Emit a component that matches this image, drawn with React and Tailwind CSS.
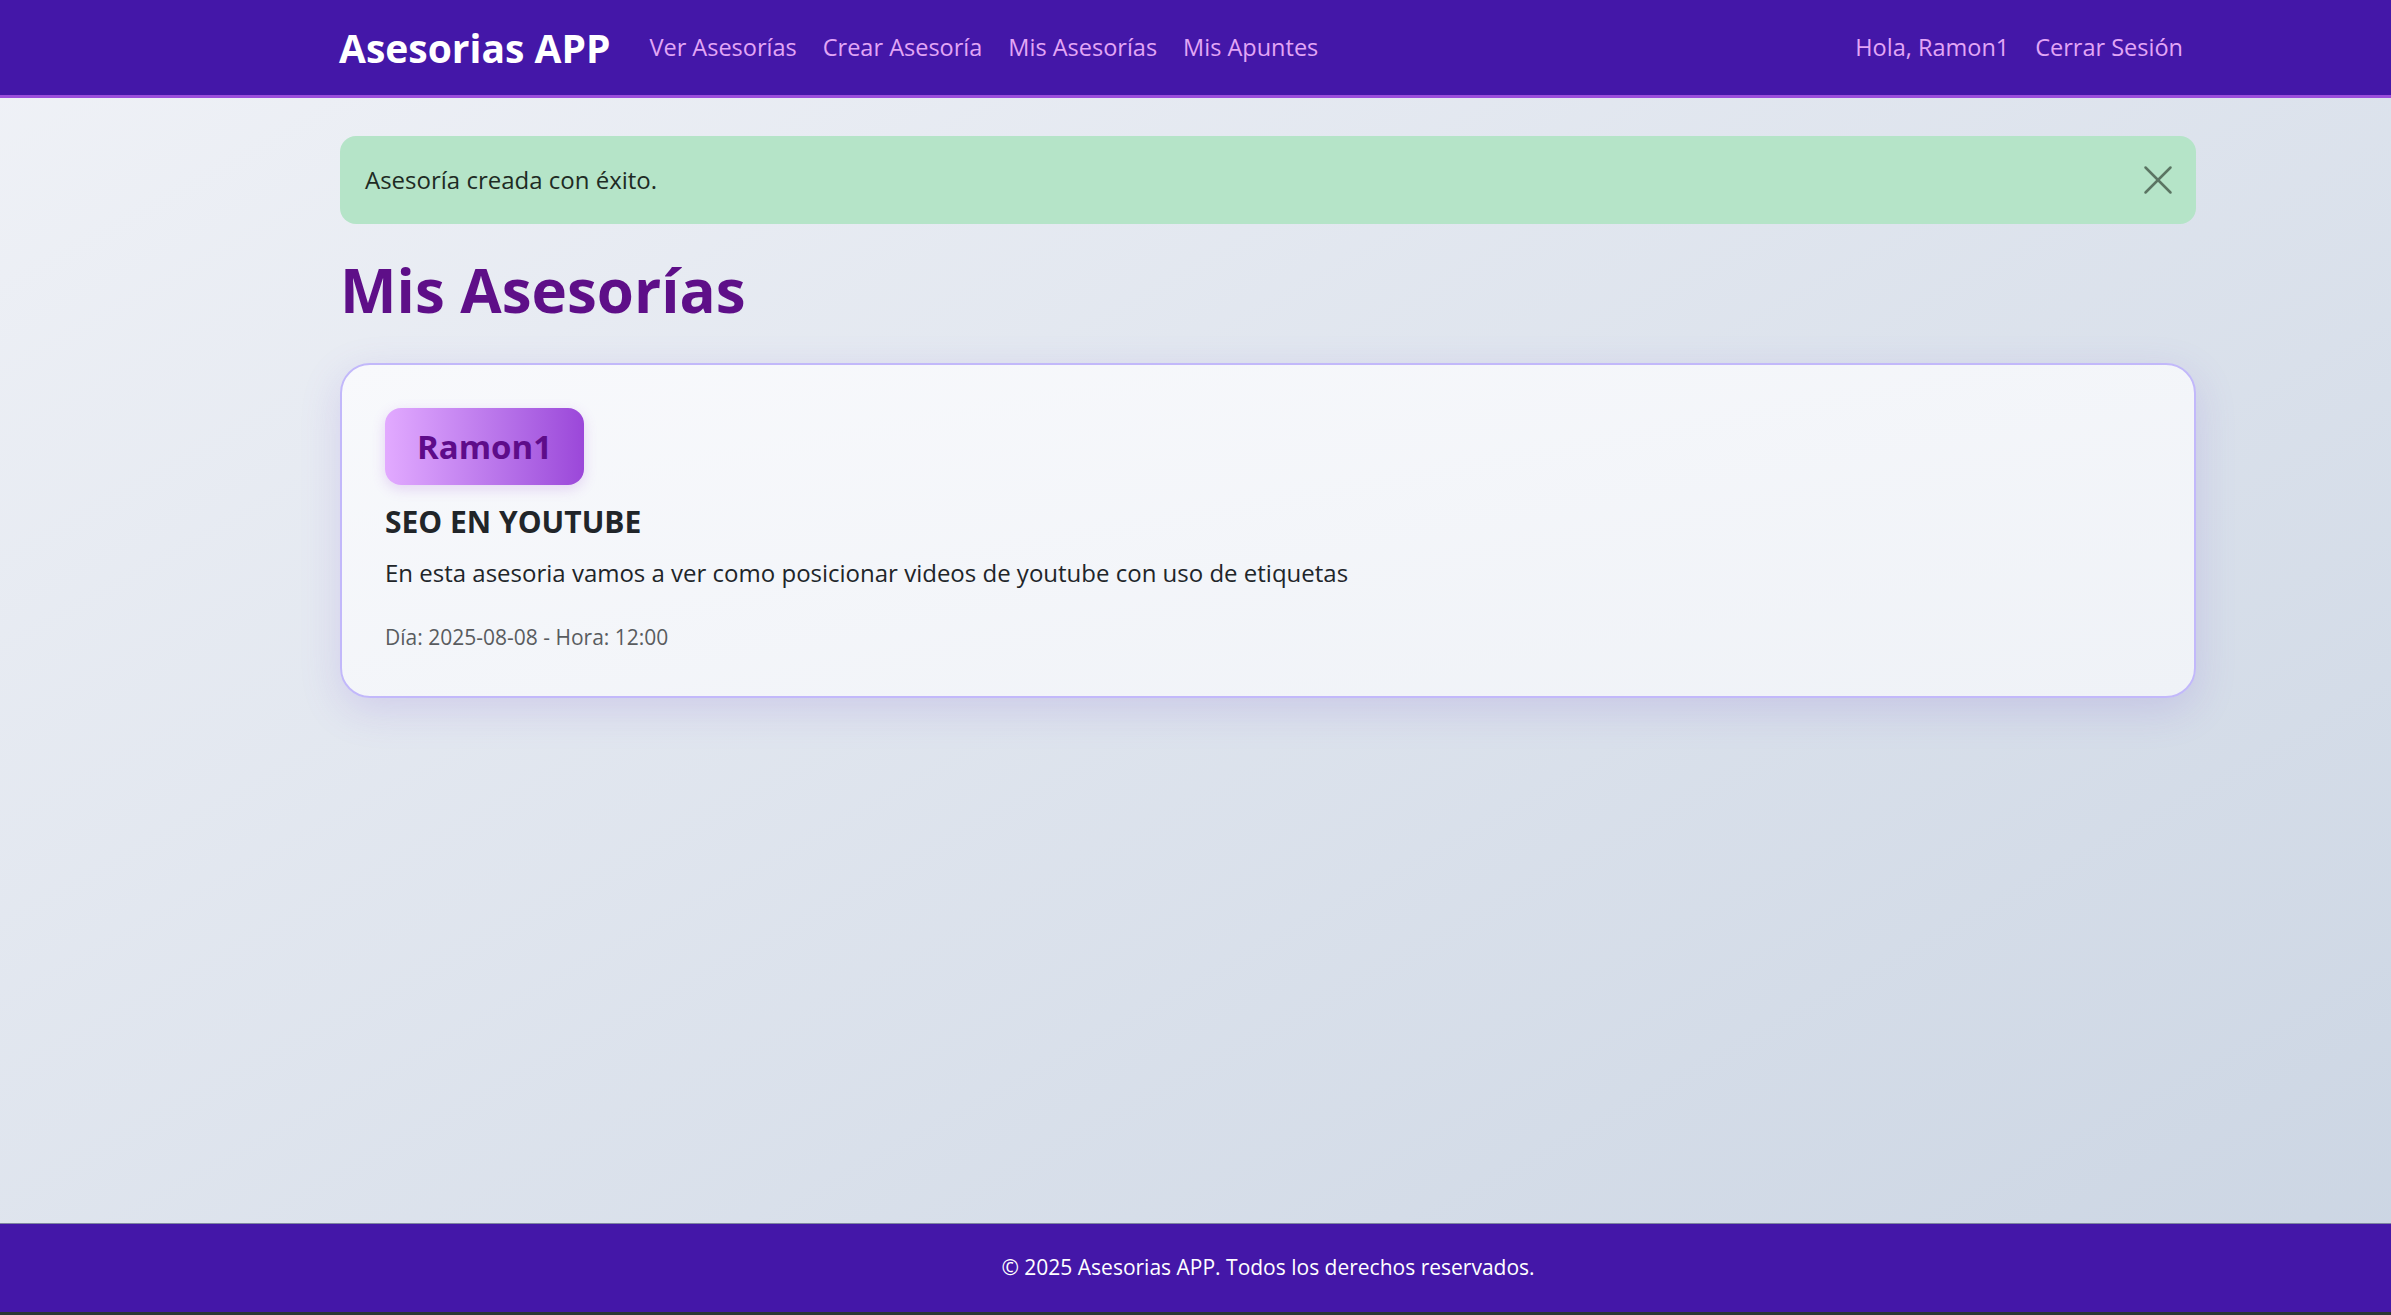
import React from 'react';
import { X } from 'lucide-react';

const navLinks = ['Ver Asesorías', 'Crear Asesoría', 'Mis Asesorías', 'Mis Apuntes'];

const asesorias = [
  {
    id: 1,
    autor: 'Ramon1',
    titulo: 'SEO EN YOUTUBE',
    descripcion: 'En esta asesoria vamos a ver como posicionar videos de youtube con uso de etiquetas',
    dia: '2025-08-08',
    hora: '12:00',
  },
];

const Navbar = () => (
  <header className="bg-[#4417a8] border-b-[3px] border-[#9b4ddb]">
    <div className="ml-[339px] w-[1857px] h-[95px] flex items-center">
      <span className="text-[39px] font-bold text-white mr-[26px] leading-none">Asesorias APP</span>
      <nav className="flex items-center">
        {navLinks.map((link) => (
          <a key={link} href="#" className="px-[13px] text-[23.5px] text-[#e2a6f6]">
            {link}
          </a>
        ))}
      </nav>
      <div className="ml-auto flex items-center">
        <span className="px-[13px] text-[23.5px] text-[#e2a6f6]">Hola, Ramon1</span>
        <a href="#" className="px-[13px] text-[23.5px] text-[#e2a6f6]">Cerrar Sesión</a>
      </div>
    </div>
  </header>
);

const AsesoriaCard = ({ asesoria }) => (
  <div className="rounded-[30px] border-2 border-[#c2b8fa] bg-gradient-to-br from-[#f8f9fc] to-[#eff2f7] p-[43px] shadow-[0_12px_40px_rgba(120,90,210,0.18)]">
    <div className="inline-flex items-center h-[77px] px-[32px] rounded-[16px] bg-gradient-to-r from-[#e2aaff] to-[#9b47d9] shadow-[0_4px_14px_rgba(155,71,217,0.2)]">
      <span className="text-[33px] font-bold text-[#5e0c8a] leading-none">{asesoria.autor}</span>
    </div>
    <h5 className="mt-[19px] text-[30px] leading-[36px] font-bold text-[#212529]">{asesoria.titulo}</h5>
    <p className="mt-[15px] text-[24px] leading-[36px] text-[#212529]">{asesoria.descripcion}</p>
    <p className="mt-[31px] text-[21px] leading-[31px] text-[#595c5f]">
      Día: {asesoria.dia} - Hora: {asesoria.hora}
    </p>
  </div>
);

const App = () => {
  return (
    <div
      className="min-h-screen flex flex-col bg-gradient-to-br from-[#f0f2f7] to-[#cbd5e3] text-[#212529]"
      style={{ fontFamily: '"Open Sans", "Noto Sans", sans-serif' }}
    >
      <Navbar />
      <main className="flex-1">
        <div className="ml-[340px] w-[1856px] pt-[38px]">
          <div className="flex items-center justify-between h-[88px] pl-[25px] pr-[13px] rounded-[16px] bg-[#b5e4c8]">
            <span className="text-[24px] text-[#1e2b24]">Asesoría creada con éxito.</span>
            <button className="text-[#5b7563]">
              <X className="w-[50px] h-[50px]" strokeWidth={1.2} />
            </button>
          </div>
          <h1 className="mt-[30px] text-[60px] leading-[72px] font-bold text-[#5e0f88]">Mis Asesorías</h1>
          <div className="mt-[37px] flex flex-col gap-6">
            {asesorias.map((a) => (
              <AsesoriaCard key={a.id} asesoria={a} />
            ))}
          </div>
        </div>
      </main>
      <footer className="h-[89px] bg-[#4417a8] border-t border-[#7d84a0] flex items-center">
        <div className="ml-[340px] w-[1856px] text-center text-[21px] text-white">
          © 2025 Asesorias APP. Todos los derechos reservados.
        </div>
      </footer>
      <div className="h-[3px] bg-[#2c3533]" />
    </div>
  );
};

export default App;
